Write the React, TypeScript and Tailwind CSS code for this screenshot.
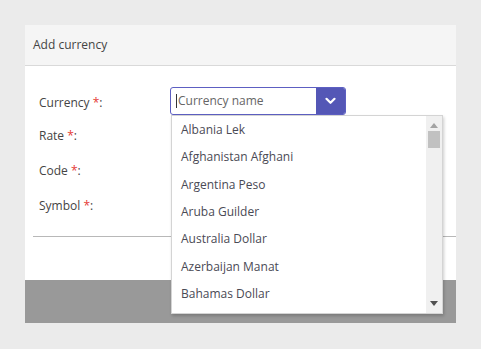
const items = [
  'Albania Lek',
  'Afghanistan Afghani',
  'Argentina Peso',
  'Aruba Guilder',
  'Australia Dollar',
  'Azerbaijan Manat',
  'Bahamas Dollar',
]

function Label({ text }: { text: string }) {
  return (
    <span className="text-[12px] text-[#444]">
      {text} <span className="text-[#e53935]">*</span>:
    </span>
  )
}

export default function App() {
  return (
    <div
      className="w-[481px] h-[349px] bg-[#ebebeb] pt-[25px] pl-[25px]"
      style={{ fontFamily: '"Open Sans", "Noto Sans", sans-serif' }}
    >
      <div className="w-[431px] bg-white">
        <div className="h-[41px] bg-[#f5f5f5] border-b border-[#d9d9d9] flex items-center pl-[8px]">
          <span className="text-[12px] text-[#444]">Add currency</span>
        </div>
        <div className="pt-[17px] pl-[14px]">
          <div className="h-[35px] flex items-center">
            <div className="w-[131px]">
              <Label text="Currency" />
            </div>
            <div className="relative">
              <div className="w-[176px] h-[28px] border border-[#5d5fc2] rounded-[3px] flex overflow-hidden">
                <div className="flex-1 flex items-center pl-[5px] text-[12px] text-[#666]">
                  <span className="w-px h-[14px] bg-[#333] mr-px" />
                  Currency name
                </div>
                <div className="w-[29px] bg-[#5457b6] flex items-center justify-center">
                  <svg width="11" height="8" viewBox="0 0 11 8">
                    <path d="M1.5 1.8 L5.5 5.8 L9.5 1.8" stroke="white" strokeWidth="2.2" fill="none" strokeLinecap="round" strokeLinejoin="round" />
                  </svg>
                </div>
              </div>
              <div className="absolute left-px top-[28px] w-[272px] h-[199px] bg-white border border-[#d4d4d4] shadow-[1px_2px_3px_rgba(0,0,0,0.2)] flex z-10">
                <div className="flex-1 overflow-hidden pt-px">
                  {items.map((it) => (
                    <div key={it} className="h-[27.3px] flex items-center pl-[9px] text-[12px] text-[#4a4a55]">
                      {it}
                    </div>
                  ))}
                </div>
                <div className="w-[16px] bg-[#f0f0f0] flex flex-col items-center">
                  <svg width="8" height="5" viewBox="0 0 8 5" className="mt-[7px]">
                    <path d="M0 5 L4 0 L8 5 Z" fill="#a3a3a3" />
                  </svg>
                  <div className="w-[12px] h-[17px] bg-[#c1c1c1] mt-[3px]" />
                  <div className="flex-1" />
                  <svg width="8" height="5" viewBox="0 0 8 5" className="mb-[7px]">
                    <path d="M0 0 L8 0 L4 5 Z" fill="#505050" />
                  </svg>
                </div>
              </div>
            </div>
          </div>
          <div className="h-[35px] flex items-center">
            <Label text="Rate" />
          </div>
          <div className="h-[35px] flex items-center">
            <Label text="Code" />
          </div>
          <div className="h-[35px] flex items-center">
            <Label text="Symbol" />
          </div>
        </div>
        <div className="mt-[13px] ml-[8px] h-px bg-[#b8b8b8]" />
        <div className="h-[43px]" />
        <div className="h-[43px] bg-[#999999]" />
      </div>
    </div>
  )
}
